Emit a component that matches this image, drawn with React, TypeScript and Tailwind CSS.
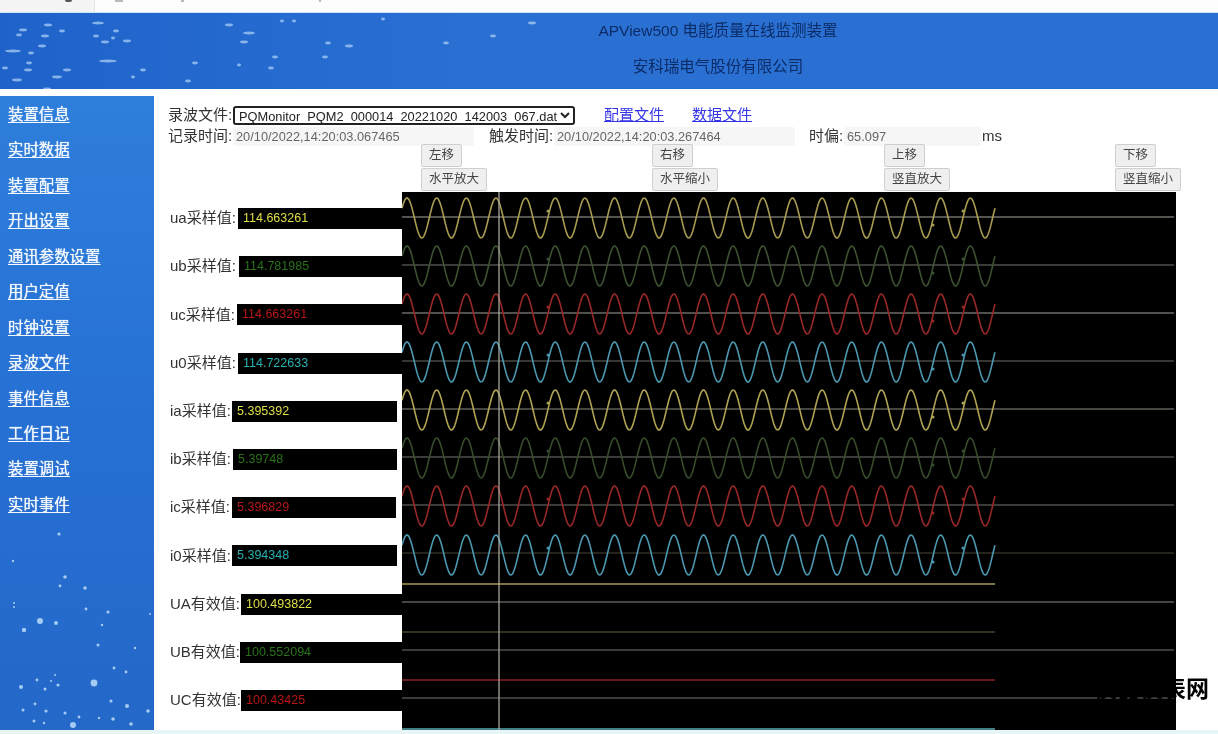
const navItems = [
  "装置信息", "实时数据", "装置配置", "开出设置", "通讯参数设置", "用户定值",
  "时钟设置", "录波文件", "事件信息", "工作日记", "装置调试", "实时事件",
];

const channels = [
  { label: "ua采样值:", value: "114.663261", box: "w-[164px]", text: "text-[#dede46]" },
  { label: "ub采样值:", value: "114.781985", box: "w-[163px]", text: "text-[#2a7219]" },
  { label: "uc采样值:", value: "114.663261", box: "w-[165px]", text: "text-[#b81616]" },
  { label: "u0采样值:", value: "114.722633", box: "w-[164px]", text: "text-[#28b0b0]" },
  { label: "ia采样值:", value: "5.395392", box: "w-[165px] mr-[5px]", text: "text-[#dede46]" },
  { label: "ib采样值:", value: "5.39748", box: "w-[164px] mr-[5px]", text: "text-[#2a7219]" },
  { label: "ic采样值:", value: "5.396829", box: "w-[164px] mr-[6px]", text: "text-[#b81616]" },
  { label: "i0采样值:", value: "5.394348", box: "w-[165px] mr-[5px]", text: "text-[#28b0b0]" },
  { label: "UA有效值:", value: "100.493822", box: "w-[161px]", text: "text-[#dede46]" },
  { label: "UB有效值:", value: "100.552094", box: "w-[162px]", text: "text-[#2a7219]" },
  { label: "UC有效值:", value: "100.43425", box: "w-[161px]", text: "text-[#b81616]" },
];

const buttons = [
  ["左移", "水平放大"],
  ["右移", "水平缩小"],
  ["上移", "竖直放大"],
  ["下移", "竖直缩小"],
];

const waves = [
  { y: 26, color: "#a89c52" },
  { y: 74, color: "#3c5230" },
  { y: 122, color: "#982828" },
  { y: 170, color: "#4c98b0" },
  { y: 218, color: "#b0a454" },
  { y: 266, color: "#364c2a" },
  { y: 314, color: "#982828" },
  { y: 363, color: "#4c98b0" },
];

const grayLines = [
  { y: 25, color: "#a8a89c" },
  { y: 73, color: "#77776e" },
  { y: 121, color: "#a0a098" },
  { y: 169, color: "#6c6c64" },
  { y: 217, color: "#8c8c80" },
  { y: 265, color: "#77776e" },
  { y: 313, color: "#77776e" },
  { y: 361, color: "#4c463a" },
  { y: 410, color: "#8a8a86" },
  { y: 458, color: "#74746e" },
  { y: 506, color: "#74746e" },
];

const flatLines = [
  { y: 392, color: "#a89a52" },
  { y: 440, color: "#3a4a28" },
  { y: 488, color: "#8c2222" },
  { y: 537, color: "#5aa8b0" },
];

// x, y, width of each star in the header picture
const headerStars = [
  [98, 10, 6], [48, 12, 4], [23, 17, 4], [62, 18, 3], [116, 18, 3], [19, 22, 3], [45, 23, 4], [96, 23, 3],
  [113, 25, 2], [127, 28, 4], [105, 29, 4], [42, 33, 4], [13, 38, 8], [31, 40, 3], [108, 48, 9], [29, 50, 3],
  [195, 50, 3], [5, 55, 3], [28, 57, 4], [67, 57, 4], [143, 57, 3], [57, 64, 5], [133, 64, 2], [17, 67, 5],
  [188, 68, 3], [47, 76, 4], [229, 12, 4], [282, 8, 2], [294, 8, 2], [383, 6, 2], [532, 10, 4], [249, 20, 6],
  [493, 23, 3], [244, 29, 4], [328, 30, 3], [349, 33, 4], [446, 30, 3], [275, 44, 3], [325, 44, 3],
  [239, 52, 2], [271, 55, 3],
];

const sideStars = [
  [59, 438, 1.6], [13, 465, 1.2], [65, 481, 1.8], [60, 490, 1.4], [85, 492, 1.8], [14, 507, 1], [14, 511, 1],
  [86, 513, 1.4], [108, 516, 1.6], [150, 518, 1], [40, 525, 3], [56, 527, 2], [24, 534, 2.2], [102, 529, 1.2],
  [98, 549, 1.5], [135, 552, 1.2], [114, 572, 1.4], [126, 576, 1.4], [55, 579, 1], [37, 584, 1.4], [51, 585, 1],
  [94, 587, 3.4], [58, 589, 1.6], [21, 591, 2], [45, 593, 1.5], [111, 605, 1.6], [127, 610, 2], [35, 608, 1.4],
  [23, 614, 1.5], [46, 615, 1.6], [65, 617, 1.5], [148, 615, 1.8], [79, 621, 1.4], [99, 622, 1.2], [113, 623, 1.8],
  [34, 625, 1.5], [44, 627, 1.2], [73, 629, 3], [131, 628, 1.8],
];

// sample markers that sit on every wave
const markers = [
  [146, -7],
  [531, 7],
  [561, -7],
];

function wavePath(center: number) {
  let d = "";
  for (let x = 0; x <= 593; x++) {
    const y = center - 20 * Math.cos((2 * Math.PI * (x - 5)) / 29.65);
    d += (x === 0 ? "M" : "L") + x + " " + y.toFixed(2) + " ";
  }
  return d;
}

function Chart() {
  return (
    <svg viewBox="0 0 774 538" className="block h-[538px] w-[774px] bg-black">
      {grayLines.map((l) => (
        <line key={l.y} x1="0" x2="772" y1={l.y} y2={l.y} stroke={l.color} strokeWidth="1.2" />
      ))}
      {waves.map((w) => (
        <g key={w.y}>
          <path d={wavePath(w.y)} fill="none" stroke={w.color} strokeWidth="1.6" />
          {markers.map(([x, dy]) => (
            <circle key={x} cx={x} cy={w.y + dy} r="1.5" fill={w.color} />
          ))}
        </g>
      ))}
      {flatLines.map((l) => (
        <line key={l.y} x1="0" x2="593" y1={l.y} y2={l.y} stroke={l.color} strokeWidth="1.5" />
      ))}
      <line x1="97" x2="97" y1="0" y2="538" stroke="#b4b4a6" strokeWidth="1.2" />
    </svg>
  );
}

export default function App() {
  return (
    <div className="relative h-[734px] w-[1218px] overflow-hidden bg-white blur-[0.6px] font-['Liberation_Sans','Noto_Sans_CJK_SC',sans-serif]">
      <div className="flex h-[13px] items-start border-b border-[#cfe4f6] bg-[#fdfdfd]">
        <div className="w-[95px] border-r border-[#e4e4e4] bg-[#f4f4f4] pl-[65px]">
          <div className="h-[2px] w-[7px] rounded-b bg-[#555]" />
          <div className="h-[10px]" />
        </div>
        <div className="ml-[20px] h-[2px] w-[8px] bg-[#bbb]" />
        <div className="ml-[58px] h-[2px] w-[3px] bg-[#bbb]" />
        <div className="ml-[135px] h-[2px] w-[2px] bg-[#bbb]" />
      </div>

      <header className="relative h-[76px] bg-gradient-to-r from-[#1f63ca] to-[#2a70d3] to-40%">
        <svg viewBox="0 0 600 76" className="absolute left-0 top-0 h-[76px] w-[600px] blur-[0.5px]">
          {headerStars.map(([x, y, w], i) => (
            <ellipse key={i} cx={x} cy={y} rx={w} ry="1.4" fill="#a9cdf5" opacity="0.75" />
          ))}
        </svg>
        <div className="relative flex h-full flex-col items-center gap-[14px] pl-[218px] pt-[7px] text-[15.5px] leading-[22px] text-[#0b2c66]">
          <div>APView500 电能质量在线监测装置</div>
          <div>安科瑞电气股份有限公司</div>
        </div>
      </header>

      <div className="mt-[7px] flex h-[634px]">
        <nav className="relative h-full w-[154px] bg-gradient-to-b from-[#2e7edb] via-[#2670d4] to-[#2468c8]">
          <svg viewBox="0 0 154 634" className="absolute left-0 top-0 h-[634px] w-[154px]">
            {sideStars.map(([x, y, r], i) => (
              <circle key={i} cx={x} cy={y} r={r} fill="#bcdcfa" opacity="0.85" />
            ))}
          </svg>
          <ul className="relative flex flex-col gap-[13.45px] pl-[8px] pt-[8px]">
            {navItems.map((item) => (
              <li key={item} className="h-[22px] text-[15.4px] leading-[22px]">
                <a href="#" className="text-[#f4f9ff] underline underline-offset-2 [text-shadow:0_0_1px_#fff]">{item}</a>
              </li>
            ))}
          </ul>
        </nav>

        <main className="flex-1 pl-[14px] pt-[10px] text-[15px] text-[#333]">
          <div className="flex h-[18px] items-center">
            <span className="w-[65px] whitespace-nowrap">录波文件:</span>
            <select className="h-[19px] w-[342px] rounded-[3px] border-2 border-[#222] bg-white text-[12.8px] text-[#222]">
              <option>PQMonitor_PQM2_000014_20221020_142003_067.dat</option>
            </select>
            <a href="#" className="ml-[29px] text-[#3535e8] underline">配置文件</a>
            <a href="#" className="ml-[28px] text-[#3535e8] underline">数据文件</a>
          </div>

          <div className="mt-[3px] flex h-[19px] items-center">
            <span className="w-[65px] whitespace-nowrap">记录时间:</span>
            <input readOnly value="20/10/2022,14:20:03.067465" className="h-[19px] w-[241px] rounded-[2px] bg-[#f6f6f6] pl-[3px] text-[12.8px] text-[#666]" />
            <span className="ml-[15px] w-[65px] whitespace-nowrap">触发时间:</span>
            <input readOnly value="20/10/2022,14:20:03.267464" className="h-[19px] w-[241px] rounded-[2px] bg-[#f6f6f6] pl-[3px] text-[12.8px] text-[#666]" />
            <span className="ml-[14px] w-[35px] whitespace-nowrap">时偏:</span>
            <input readOnly value="65.097" className="h-[19px] w-[137px] rounded-[2px] bg-[#f6f6f6] pl-[3px] text-[12.8px] text-[#666]" />
            <span className="ml-[1px]">ms</span>
          </div>

          <div className="relative -mt-[2px] grid grid-cols-[231px_232px_231px_auto] pl-[253px]">
            {buttons.map(([top, bottom]) => (
              <div key={top} className="flex flex-col items-start gap-[1px]">
                {[top, bottom].map((b) => (
                  <button key={b} className="h-[23px] rounded-[2px] border border-[#cfcfcf] bg-[#efefef] px-[7px] text-[12.5px] whitespace-nowrap text-[#444]">
                    {b}
                  </button>
                ))}
              </div>
            ))}
          </div>

          <div className="mt-[1px] flex">
            <div className="flex w-[234px] flex-col gap-[27.2px] pt-[16px]">
              {channels.map((c) => (
                <div key={c.label} className="flex h-[21px] items-center">
                  <span className="flex-1 whitespace-nowrap pl-[2px]">{c.label}</span>
                  <span className={"relative h-[21px] shrink-0 bg-black pl-[5px] text-[12.5px] leading-[21px] " + c.box + " " + c.text}>
                    {c.value}
                  </span>
                </div>
              ))}
            </div>
            <Chart />
          </div>
        </main>
      </div>

      <div className="h-[4px] bg-[#e8f5f6]" />

      <div className="absolute right-[9px] top-[676px] whitespace-nowrap text-[23px] font-bold leading-[26px] text-black">
        仪器仪表网
      </div>
    </div>
  );
}
